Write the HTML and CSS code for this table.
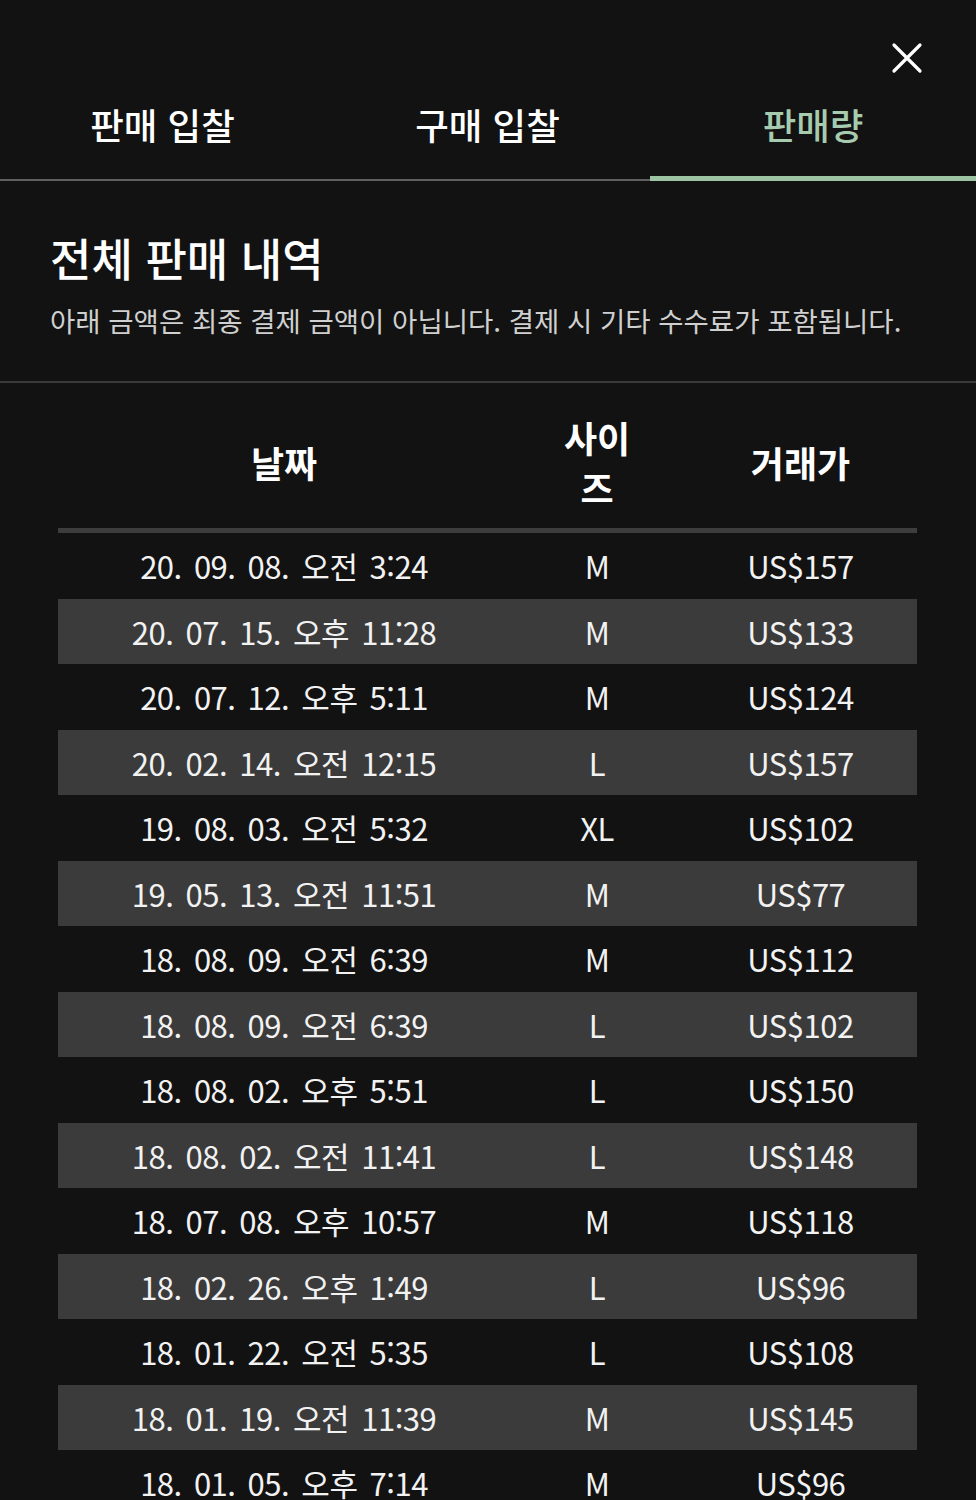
FILE: index.html
```html
<!DOCTYPE html>
<html lang="ko">
<head>
<meta charset="utf-8">
<link rel="stylesheet" href="styles.css">
</head>
<body>
<div class="page">
  <div class="topbar">
    <button class="close" aria-label="닫기">
      <svg width="32" height="32" viewBox="0 0 32 32"><path d="M3 3 L29 29 M29 3 L3 29" stroke="#fff" stroke-width="3.2" stroke-linecap="round" fill="none"/></svg>
    </button>
  </div>
  <nav class="tabs">
    <div class="tab">판매 입찰</div>
    <div class="tab">구매 입찰</div>
    <div class="tab active">판매량</div>
  </nav>
  <section class="intro">
    <h1 class="title">전체 판매 내역</h1>
    <p class="note">아래 금액은 최종 결제 금액이 아닙니다. 결제 시 기타 수수료가 포함됩니다.</p>
  </section>
  <div class="table-wrap">
    <table class="sales">
      <thead>
        <tr>
          <th class="c-date">날짜</th>
          <th class="c-size"><span class="wrap">사이즈</span></th>
          <th class="c-price">거래가</th>
        </tr>
      </thead>
      <tbody>
        <tr><td class="d">20. 09. 08. 오전 3:24</td><td>M</td><td>US$157</td></tr>
        <tr><td class="d">20. 07. 15. 오후 11:28</td><td>M</td><td>US$133</td></tr>
        <tr><td class="d">20. 07. 12. 오후 5:11</td><td>M</td><td>US$124</td></tr>
        <tr><td class="d">20. 02. 14. 오전 12:15</td><td>L</td><td>US$157</td></tr>
        <tr><td class="d">19. 08. 03. 오전 5:32</td><td>XL</td><td>US$102</td></tr>
        <tr><td class="d">19. 05. 13. 오전 11:51</td><td>M</td><td>US$77</td></tr>
        <tr><td class="d">18. 08. 09. 오전 6:39</td><td>M</td><td>US$112</td></tr>
        <tr><td class="d">18. 08. 09. 오전 6:39</td><td>L</td><td>US$102</td></tr>
        <tr><td class="d">18. 08. 02. 오후 5:51</td><td>L</td><td>US$150</td></tr>
        <tr><td class="d">18. 08. 02. 오전 11:41</td><td>L</td><td>US$148</td></tr>
        <tr><td class="d">18. 07. 08. 오후 10:57</td><td>M</td><td>US$118</td></tr>
        <tr><td class="d">18. 02. 26. 오후 1:49</td><td>L</td><td>US$96</td></tr>
        <tr><td class="d">18. 01. 22. 오전 5:35</td><td>L</td><td>US$108</td></tr>
        <tr><td class="d">18. 01. 19. 오전 11:39</td><td>M</td><td>US$145</td></tr>
        <tr><td class="d">18. 01. 05. 오후 7:14</td><td>M</td><td>US$96</td></tr>
      </tbody>
    </table>
  </div>
</div>
</body>
</html>
```
FILE: styles.css
```css
html, body {
  margin: 0;
  padding: 0;
  background: #121212;
}
body {
  font-family: "Noto Sans CJK KR", "Noto Sans", sans-serif;
  color: #f2f2f2;
}
.page {
  width: 976px;
  min-height: 1500px;
  background: #121212;
}
.topbar {
  display: flex;
  justify-content: flex-end;
  height: 88px;
  padding: 42px 53px 0 0;
  box-sizing: border-box;
}
.close {
  background: none;
  border: 0;
  padding: 0;
  width: 32px;
  height: 32px;
  display: block;
}
.tabs {
  display: grid;
  grid-template-columns: 325px 325px 326px;
  border-bottom: 2px solid #5f5f5f;
  height: 93px;
  box-sizing: border-box;
}
.tab {
  text-align: center;
  font-size: 36.5px;
  font-weight: 500;
  line-height: 74px;
  color: #ffffff;
}
.tab.active {
  color: #a6cbae;
  box-shadow: inset 0 -5px 0 #9cc4a4;
  margin-bottom: -2px;
}
.intro {
  padding: 48px 50px 43px;
  border-bottom: 2px solid #3a3a3a;
}
.title {
  margin: 0;
  font-size: 45px;
  font-weight: 500;
  line-height: 58px;
  color: #ffffff;
}
.note {
  margin: 15px 0 0;
  font-size: 27.5px;
  line-height: 36px;
  color: #d0d0d0;
  font-weight: 400;
  white-space: nowrap;
}
.table-wrap {
  padding: 29px 59px 0 58px;
}
.sales {
  width: 859px;
  border-collapse: collapse;
  table-layout: fixed;
}
.sales th {
  font-size: 36px;
  font-weight: 700;
  line-height: 50px;
  color: #ffffff;
  padding: 0 0 16px;
  border-bottom: 5px solid #3d3d3d;
  vertical-align: middle;
}
.c-date { width: 452px; }
.c-size { width: 174px; }
.c-price { width: 233px; }
.wrap {
  display: inline-block;
  width: 2.1em;
}
.sales td {
  height: 65.5px;
  padding: 0;
  text-align: center;
  font-size: 31px;
  font-weight: 400;
  color: #f2f2f2;
  letter-spacing: -0.5px;
  vertical-align: middle;
  font-variant-numeric: proportional-nums;
}
.sales td.d {
  word-spacing: 4px;
}
.sales tbody tr:nth-child(even) {
  background: #3b3b3b;
}
```
